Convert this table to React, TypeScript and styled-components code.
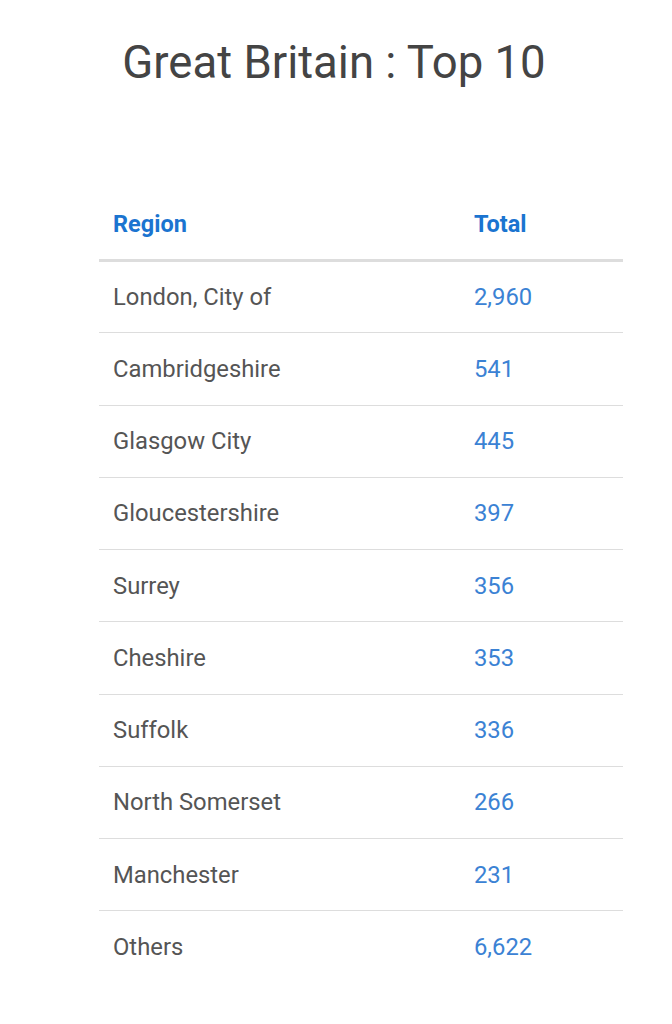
import styled, { createGlobalStyle } from "styled-components";

const GlobalStyle = createGlobalStyle`
  body {
    margin: 0;
    background: #fff;
    font-family: Roboto, "Liberation Sans", sans-serif;
  }
`

const rows: [string, string][] = [
    ["London, City of", "2,960"],
    ["Cambridgeshire", "541"],
    ["Glasgow City", "445"],
    ["Gloucestershire", "397"],
    ["Surrey", "356"],
    ["Cheshire", "353"],
    ["Suffolk", "336"],
    ["North Somerset", "266"],
    ["Manchester", "231"],
    ["Others", "6,622"],
]

export default function App() {
    return (
        <Page>
            <GlobalStyle/>
            <Title>Great Britain : Top 10</Title>
            <Table>
                <colgroup>
                    <col style={{width: "361px"}}/>
                    <col/>
                </colgroup>
                <thead>
                    <tr>
                        <HeadCell>Region</HeadCell>
                        <HeadCell>Total</HeadCell>
                    </tr>
                </thead>
                <tbody>
                    {rows.map(([region, total], i) => (
                        <Row key={region} $last={i === rows.length - 1}>
                            <Cell>{region}</Cell>
                            <ValueCell>{total}</ValueCell>
                        </Row>
                    ))}
                </tbody>
            </Table>
        </Page>
    )
}

const Page = styled.div`
  width: 672px;
  padding-top: 36px;
  display: flex;
  flex-direction: column;
  align-items: center;
`

const Title = styled.h1`
  margin: 0 4px 0 0;
  font-size: 45.5px;
  font-weight: 400;
  color: #444;
  line-height: 54px;
`

const Table = styled.table`
  align-self: flex-start;
  margin: 98px 0 0 99px;
  width: 524px;
  border-collapse: collapse;
  table-layout: fixed;
`

const HeadCell = styled.th`
  text-align: left;
  padding: 0 14px;
  height: 71px;
  vertical-align: middle;
  font-size: 23.5px;
  font-weight: 700;
  color: #1b74d0;
  border-bottom: 3px solid #dddddd;
`

const Row = styled.tr<{ $last?: boolean }>`
  height: 72.25px;
  border-bottom: ${p => p.$last ? "none" : "1.5px solid #dddddd"};
`

const Cell = styled.td`
  padding: 0 14px;
  font-size: 23.8px;
  color: #555;
  vertical-align: middle;
`

const ValueCell = styled(Cell)`
  color: #3b82d4;
`
